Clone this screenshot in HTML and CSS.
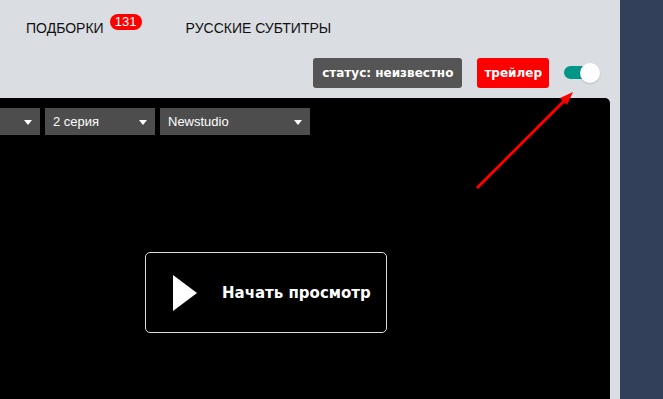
FILE: index.html
```html
<html>
<head>
	<meta charset="utf-8">
	<link rel="stylesheet" href="styles.css">
</head>
<body>
	<div class="page">
		<div class="content">
			<nav class="menu">
				<a class="menu-item">ПОДБОРКИ<span class="badge">131</span></a>
				<a class="menu-item">РУССКИЕ СУБТИТРЫ</a>
			</nav>

			<div class="toolbar">
				<div class="btn btn-status">статус: неизвестно</div>
				<div class="btn btn-trailer">трейлер</div>
				<div class="toggle on"><div class="knob"></div></div>
			</div>

			<div class="player">
				<div class="selects">
					<div class="select"></div>
					<div class="select">2 серия</div>
					<div class="select wider">Newstudio</div>
				</div>
				<div class="start">
					<div class="play"></div>
					<div class="start-label">Начать просмотр</div>
				</div>
			</div>
		</div>
		<div class="sidebar"></div>
	</div>

	<svg class="arrow" width="663" height="399" viewBox="0 0 663 399">
		<line x1="477" y1="188" x2="566" y2="99" stroke="#ff0000" stroke-width="3"/>
		<polygon points="573,92 560,98 567,105" fill="#ff0000"/>
	</svg>
</body>
</html>
```

FILE: styles.css
```css
body				{ margin: 0; padding: 0; font: 14px "Liberation Sans", Arial, sans-serif; overflow: hidden; }
.page				{ display: flex; width: 663px; height: 399px; overflow: hidden; }
.content			{ width: 620px; background: #dadde2; display: flex; flex-direction: column; }
.sidebar			{ flex: 1; background: #334059; }

.menu				{ display: flex; padding: 18px 0 0 26px; height: 20px; line-height: 20px; }
.menu-item			{ color: #111; font-size: 14px; margin-right: 44px; white-space: nowrap; }
.badge				{ display: inline-block; vertical-align: top; margin: -4px 0 0 6px; padding: 0 4px;
					  height: 16px; line-height: 16px; min-width: 24px; text-align: center;
					  background: #ff0000; color: #fff; font-size: 13px; border-radius: 8px; }

.toolbar			{ display: flex; justify-content: flex-end; align-items: center; gap: 15px;
					  margin-top: 20px; padding-right: 20px; height: 30px; }
.btn				{ height: 30px; padding: 0 9px; border-radius: 3px; color: #fff;
					  font: bold 12px/30px "DejaVu Sans", Verdana, sans-serif; white-space: nowrap; }
.btn-status			{ background: #555555; }
.btn-trailer		{ background: #ff0000; padding: 0 7px; }
.toggle				{ position: relative; width: 36px; height: 20px; }
.toggle:before		{ content: ""; position: absolute; left: 0; top: 3px; width: 30px; height: 13px;
					  border-radius: 7px; background: #009688; }
.toggle .knob		{ position: absolute; right: 0; top: 0; width: 20px; height: 20px; border-radius: 50%;
					  background: #fff; box-shadow: 0 1px 2px rgba(0, 0, 0, 0.15); }

.player				{ flex: 1; margin: 10px 10px 0 0; padding-top: 10px; background: #000;
					  border-top-right-radius: 5px; }
.selects			{ display: flex; gap: 5px; margin-left: -70px; }
.select				{ position: relative; width: 102px; height: 27px; line-height: 27px; padding-left: 8px;
					  background: #4d4d4d; color: #fff; font-size: 13px; }
.select.wider		{ width: 142px; }
.select:after		{ content: ""; position: absolute; right: 8px; top: 12px;
					  border-left: 4px solid transparent; border-right: 4px solid transparent;
					  border-top: 5px solid #fff; }

.start				{ display: flex; align-items: center; width: 240px; height: 79px; margin: 117px 0 0 145px;
					  border: 1px solid #dcdcdc; border-radius: 5px; }
.play				{ width: 0; height: 0; margin-left: 27px; border-top: 18px solid transparent;
					  border-bottom: 18px solid transparent; border-left: 24px solid #fff; }
.start-label		{ margin-left: 25px; color: #fff; font: bold 15px "DejaVu Sans", Verdana, sans-serif; white-space: nowrap; }

.arrow				{ position: absolute; left: 0; top: 0; pointer-events: none; }
```
